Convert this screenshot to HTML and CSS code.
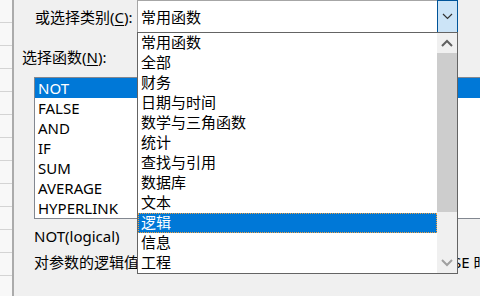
FILE: index.html
```html
<!DOCTYPE html>
<html lang="zh-CN">
<head>
    <meta charset="UTF-8">
    <title>插入函数</title>
    <link rel="stylesheet" href="styles.css">
</head>
<body>
    <div class="sheet"></div>

    <div class="dialog">
        <div class="category-row">
            <label class="label category-label">或选择类别(<u>C</u>):</label>
            <div class="combo">
                <span class="combo-value">常用函数</span>
                <span class="combo-btn">
                    <svg width="11" height="7" viewBox="0 0 11 7"><path d="M1 1l4.5 4.5L10 1" fill="none" stroke="#333" stroke-width="1.2"/></svg>
                </span>
            </div>
        </div>

        <div class="label fn-label">选择函数(<u>N</u>):</div>

        <ul class="fn-list">
            <li class="selected">NOT</li>
            <li>FALSE</li>
            <li>AND</li>
            <li>IF</li>
            <li>SUM</li>
            <li>AVERAGE</li>
            <li>HYPERLINK</li>
        </ul>

        <div class="syntax">NOT(logical)</div>
        <div class="desc">对参数的逻辑值求反：参数为 TRUE 时返回 FALSE；参数为 FALSE 时返回 TRUE</div>

        <!-- 打开的下拉列表 -->
        <div class="dropdown">
            <ul class="dropdown-items">
                <li>常用函数</li>
                <li>全部</li>
                <li>财务</li>
                <li>日期与时间</li>
                <li>数学与三角函数</li>
                <li>统计</li>
                <li>查找与引用</li>
                <li>数据库</li>
                <li>文本</li>
                <li class="selected">逻辑</li>
                <li>信息</li>
                <li>工程</li>
            </ul>
            <div class="scrollbar">
                <span class="arrow">
                    <svg width="12" height="8" viewBox="0 0 12 8"><path d="M1 7l5-5 5 5" fill="none" stroke="#606060" stroke-width="2"/></svg>
                </span>
                <span class="thumb"></span>
                <span class="track"></span>
                <span class="arrow">
                    <svg width="12" height="8" viewBox="0 0 12 8"><path d="M1 1l5 5 5-5" fill="none" stroke="#a0a0a0" stroke-width="2"/></svg>
                </span>
            </div>
        </div>
    </div>
</body>
</html>
```

FILE: styles.css
```css
* {
    box-sizing: border-box;
    margin: 0;
    padding: 0;
}

body {
    display: flex;
    width: 480px;
    height: 296px;
    overflow: hidden;
    font-family: "Noto Sans", "Noto Sans CJK SC", sans-serif;
    font-size: 15px;
    color: #000;
    background: #f0f0f0;
}

ul {
    list-style: none;
}

u {
    text-decoration-thickness: 1px;
    text-underline-offset: 2px;
}

.sheet {
    width: 14px;
    flex-shrink: 0;
    border-right: 2px solid #ababab;
    background: repeating-linear-gradient(to bottom, #f8f8f8 0, #f8f8f8 22px, #d4d4d4 22px, #d4d4d4 23px);
}

.dialog {
    position: relative;
    flex: 1;
    background: #f0f0f0;
}

.label {
    line-height: 20px;
    white-space: nowrap;
}

.category-row {
    display: flex;
    align-items: center;
    height: 33px;
    padding-left: 21px;
}

.category-label {
    width: 102px;
}

.combo {
    display: flex;
    align-items: center;
    width: 321px;
    height: 33px;
    background: #fff;
    border: 1px solid #a6a6a6;
    border-bottom: none;
    border-right: none;
}

.combo-value {
    flex: 1;
    padding-left: 3px;
    padding-bottom: 1px;
}

.combo-btn {
    display: flex;
    align-items: center;
    justify-content: center;
    width: 21px;
    height: 33px;
    margin-top: -1px;
    background: #cce4f7;
    border: 1px solid #005499;
}

.fn-label {
    margin-top: 14px;
    padding-left: 8px;
}

.fn-list {
    margin: 10px -40px 0 20px;
    height: 142px;
    background: #fff;
    border: 1px solid #828790;
}

.fn-list li {
    height: 20px;
    line-height: 20px;
    padding-left: 3px;
}

.fn-list li.selected {
    background: #0078d7;
    color: #fff;
}

.syntax {
    margin-top: 7px;
    padding-left: 20px;
    line-height: 20px;
}

.desc {
    margin-top: 6px;
    padding-left: 20px;
    line-height: 20px;
    white-space: nowrap;
}

.dropdown {
    position: absolute;
    left: 123px;
    top: 32px;
    width: 321px;
    height: 242px;
    display: flex;
    background: #fff;
    border: 1px solid #646464;
}

.dropdown-items {
    flex: 1;
}

.dropdown-items li {
    height: 20px;
    line-height: 19px;
    padding-left: 3px;
    white-space: nowrap;
}

.dropdown-items li.selected {
    background: #0078d7;
    color: #fff;
    border: 1px dotted #f0a040;
    padding-left: 2px;
    line-height: 17px;
}

.scrollbar {
    display: flex;
    flex-direction: column;
    width: 20px;
    background: #f0f0f0;
}

.scrollbar .arrow {
    display: flex;
    align-items: center;
    justify-content: center;
    height: 20px;
}

.scrollbar .thumb {
    height: 159px;
    background: #cdcdcd;
}

.scrollbar .track {
    flex: 1;
}
```
